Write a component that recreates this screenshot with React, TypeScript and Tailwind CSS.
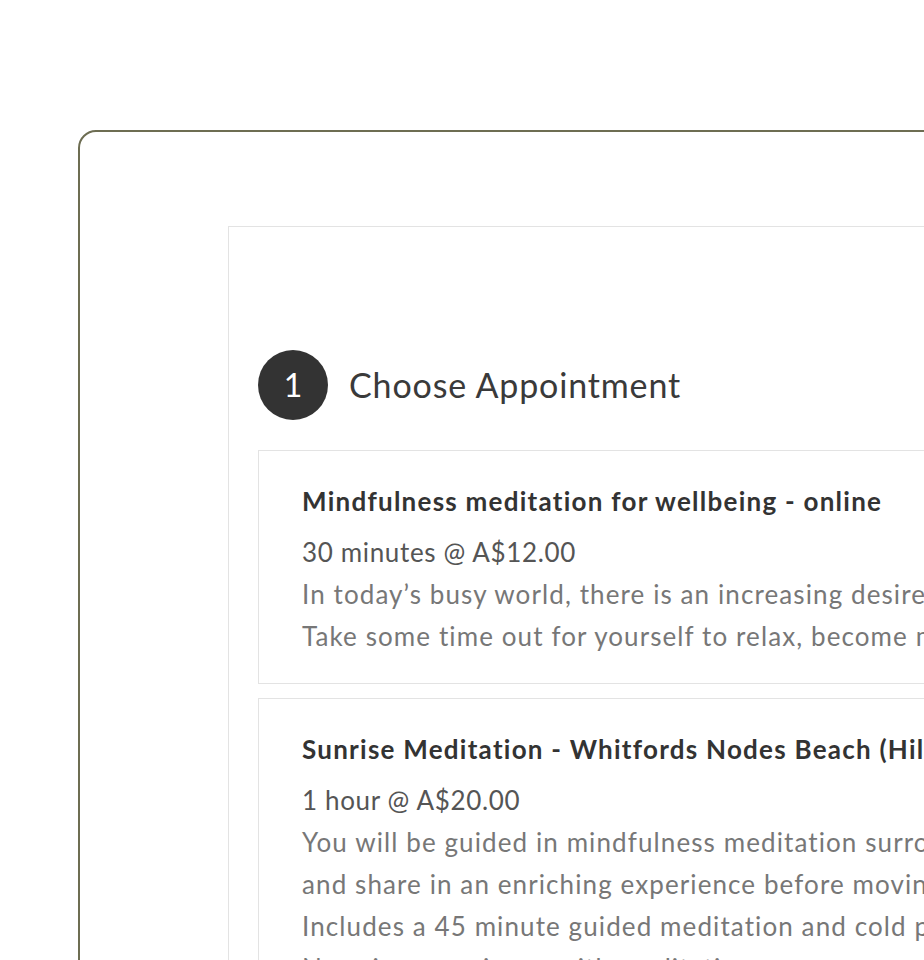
import React from 'react';

type Appointment = {
  title: string;
  duration: string;
  lines: string[];
};

const appointments: Appointment[] = [
  {
    title: 'Mindfulness meditation for wellbeing - online',
    duration: '30 minutes @ A$12.00',
    lines: [
      'In today’s busy world, there is an increasing desire to find a sense of calm and balance.',
      'Take some time out for yourself to relax, become more present and reconnect with yourself.',
    ],
  },
  {
    title: 'Sunrise Meditation - Whitfords Nodes Beach (Hillarys)',
    duration: '1 hour @ A$20.00',
    lines: [
      'You will be guided in mindfulness meditation surrounded by the sounds of the ocean',
      'and share in an enriching experience before moving into your day.',
      'Includes a 45 minute guided meditation and cold plunge in the ocean.',
      'No prior experience with meditation necessary.',
    ],
  },
];

// Single appointment option card
const AppointmentCard: React.FC<{ item: Appointment }> = ({ item }) => (
  <div className="border border-[#e3e3e3] bg-white pl-[43px] pr-6 pt-[29px] pb-[26px]">
    <div className="whitespace-nowrap text-[26px] font-bold leading-[42px] tracking-[1.25px] text-[#333333] mb-[9px]">
      {item.title}
    </div>
    <div className="whitespace-nowrap text-[26px] leading-[42px] tracking-[0.65px] text-[#555555]">
      {item.duration}
    </div>
    {item.lines.map((line) => (
      <div key={line} className="whitespace-nowrap text-[26px] leading-[42px] tracking-[1.1px] text-[#777777]">
        {line}
      </div>
    ))}
  </div>
);

export default function App() {
  return (
    <div
      className="h-screen w-screen overflow-hidden bg-white"
      style={{ fontFamily: 'Lato, "Open Sans", sans-serif' }}
    >
      <div className="pl-[78px] pt-[130px]">
        {/* Outer booking frame */}
        <div className="w-[1100px] h-[1200px] rounded-tl-[18px] border-2 border-[#6d6d52] pl-[148px] pt-[94px]">
          {/* Scheduler panel */}
          <div className="h-[1100px] border border-[#e3e3e3] px-[29px] pt-[123px]">
            <div className="flex items-center gap-[21px]">
              <div className="flex h-[70px] w-[70px] items-center justify-center rounded-full bg-[#333333] text-[32px] leading-none text-white">
                1
              </div>
              <h2 className="text-[34px] leading-none tracking-[0.85px] text-[#3a3a3a]">Choose Appointment</h2>
            </div>
            <div className="mt-[30px] flex flex-col gap-[14px]">
              {appointments.map((a) => (
                <AppointmentCard key={a.title} item={a} />
              ))}
            </div>
          </div>
        </div>
      </div>
    </div>
  );
}
